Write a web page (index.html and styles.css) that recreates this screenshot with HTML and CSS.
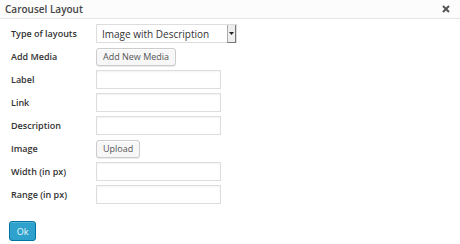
FILE: index.html
```html
<!DOCTYPE html>
<html>
<head>
<meta charset="utf-8">
<link rel="stylesheet" href="styles.css">
</head>
<body>
<div class="dialog">
  <div class="header">
    <span class="title">Carousel Layout</span>
    <svg class="close" width="8" height="8" viewBox="0 0 8 8"><path d="M1 1L7 7M7 1L1 7" stroke="#555" stroke-width="2"/></svg>
  </div>
  <div class="form">
    <div class="label">Type of layouts</div>
    <div class="cell"><div class="select"><span class="sel-text">Image with Description</span><span class="arrow"><svg width="5" height="3" viewBox="0 0 5 3"><path d="M0 0h5L2.5 3z" fill="#222"/></svg></span></div></div>
    <div class="label">Add Media</div>
    <div class="cell"><button class="btn">Add New Media</button></div>
    <div class="label">Label</div>
    <div class="cell"><div class="input"></div></div>
    <div class="label">Link</div>
    <div class="cell"><div class="input"></div></div>
    <div class="label">Description</div>
    <div class="cell"><div class="input"></div></div>
    <div class="label">Image</div>
    <div class="cell"><button class="btn">Upload</button></div>
    <div class="label">Width (in px)</div>
    <div class="cell"><div class="input"></div></div>
    <div class="label">Range (in px)</div>
    <div class="cell"><div class="input"></div></div>
  </div>
  <div class="footer"><button class="ok">Ok</button></div>
</div>
</body>
</html>
```
FILE: styles.css
```css
html, body { margin: 0; padding: 0; background: #fff; }
body { font-family: "Open Sans", "DejaVu Sans", sans-serif; color: #333; width: 460px; height: 244px; overflow: hidden; }
.dialog { width: 460px; }
.header { height: 18px; border-bottom: 1px solid #e5e5e5; background: #fcfcfc; display: flex; align-items: center; justify-content: space-between; padding: 0 10px 0 5px; }
.title { font-size: 10px; font-weight: 600; color: #444; }
.close { display: block; }
.form { display: grid; grid-template-columns: 85px auto; grid-auto-rows: 23px; padding: 3px 0 0 11px; align-items: center; }
.label { font-size: 9px; font-weight: 600; color: #333; }
.cell { display: flex; align-items: center; }
.select { width: 139px; height: 17px; border: 1px solid #ddd; display: flex; align-items: center; justify-content: space-between; }
.sel-text { font-size: 10px; color: #333; padding-left: 5px; }
.arrow { width: 7px; height: 17px; border-left: 1px solid #aaa; border-right: 1px solid #777; border-bottom: 1px solid #777; background: #eee; display: flex; align-items: center; justify-content: center; margin-top: 1px; }
.btn { height: 18px; padding: 0 6px; font-family: "Open Sans", sans-serif; font-size: 9px; color: #555; background: #f7f7f7; border: 1px solid #ccc; border-radius: 3px; box-shadow: inset 0 1px 0 #fff, 0 1px 0 rgba(0,0,0,.08); }
.input { width: 123px; height: 17px; border: 1px solid #ddd; box-shadow: inset 0 1px 2px rgba(0,0,0,.05); }
.footer { display: flex; padding: 15px 0 0 9px; }
.ok { width: 27px; height: 20px; padding: 0; font-family: "Open Sans", sans-serif; font-size: 9px; color: #e8f6fb; background: #2ea2cc; border: 1px solid #0074a2; border-radius: 3px; box-shadow: inset 0 1px 0 rgba(120,200,230,.5); }
```
